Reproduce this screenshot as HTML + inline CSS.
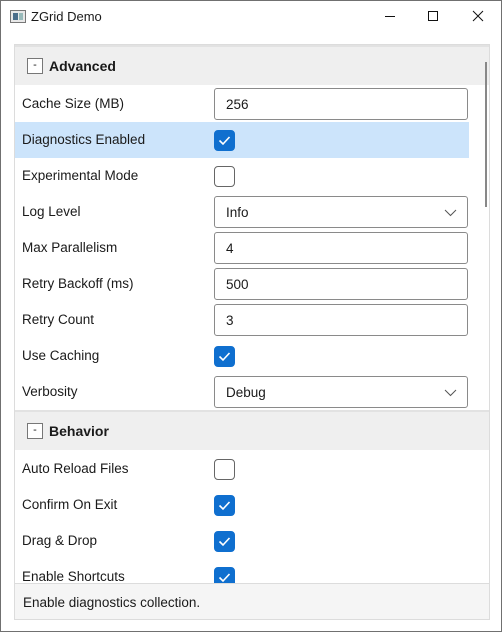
<!DOCTYPE html><html><head><style>
*{box-sizing:border-box;margin:0;padding:0}
body{width:502px;height:632px;background:#fff;font-family:"Liberation Sans",sans-serif;font-size:13.5px;color:#1a1a1a;position:relative;overflow:hidden}
.win{position:absolute;left:0;top:0;width:502px;height:632px;border:1px solid #707070}
.t{position:absolute;left:30px;top:8px;font-size:13px}
.grid{position:absolute;left:13px;top:43px;width:476px;height:576px;border:1px solid #dcdcdc;overflow:hidden}
.hdr{position:absolute;left:0;width:474px;height:40px;background:#efefef;border-top:2px solid #e2e2e2}
.hdr .b{position:absolute;left:12px;top:11px;width:16px;height:16px;border:1px solid #777;background:#fff;font-size:11px;text-align:center;line-height:13px}
.hdr .l{position:absolute;left:34px;top:11px;font-weight:bold;font-size:14px}
.row{position:absolute;left:0;width:454px;height:36px}
.row .l{position:absolute;left:7px;top:10px}
.sel{background:#cce4fb}
.in{position:absolute;left:199px;top:2px;width:254px;height:32px;border:1px solid #8a8a8a;border-radius:3px;background:#fff;padding:8px 11px;font-size:13.5px}
.cb{position:absolute;left:199px;top:8px;width:21px;height:21px;border:1px solid #666;border-radius:4px;background:#fff}
.cb.on{background:#0f6fcf;border-color:#0f6fcf}
.cb svg{position:absolute;left:3px;top:4px}
.chev{position:absolute;right:10px;top:12px}
.foot{position:absolute;left:0;top:538px;width:474px;height:37px;background:#f5f5f5;border-top:1px solid #dcdcdc;padding:11px 8px}
.sb{position:absolute;left:470px;top:17px;width:2px;height:145px;background:#888}
</style></head><body><div class="win">
<svg style="position:absolute;left:9px;top:9px" width="16" height="13"><rect x="0.5" y="0.5" width="15" height="12" fill="#e8e8e8" stroke="#777"/><rect x="3" y="3" width="5" height="7" fill="#4a6e8a"/><rect x="9" y="3" width="4" height="7" fill="#9bb"/></svg>
<div class="t">ZGrid Demo</div>
<svg style="position:absolute;left:384px;top:8px" width="110" height="16"><line x1="0" y1="7.5" x2="10" y2="7.5" stroke="#111"/><rect x="43.5" y="2.5" width="9" height="9" fill="none" stroke="#111"/><path d="M88 2L98 12M98 2L88 12" stroke="#111"/></svg>
<div class="grid">
<div class="hdr" style="top:0"><div class="b">-</div><div class="l">Advanced</div></div>
<div class="row" style="top:41px"><div class="l">Cache Size (MB)</div><div class="in">256</div></div>
<div class="row sel" style="top:77px"><div class="l">Diagnostics Enabled</div><div class="cb on"><svg width="13" height="11"><path d="M1.5 5.5L5 9L11.5 2" stroke="#fff" stroke-width="1.6" fill="none"/></svg></div></div>
<div class="row" style="top:113px"><div class="l">Experimental Mode</div><div class="cb"></div></div>
<div class="row" style="top:149px"><div class="l">Log Level</div><div class="in">Info<svg class="chev" width="13" height="8"><path d="M1 1L6.5 6.5L12 1" stroke="#555" fill="none"/></svg></div></div>
<div class="row" style="top:185px"><div class="l">Max Parallelism</div><div class="in">4</div></div>
<div class="row" style="top:221px"><div class="l">Retry Backoff (ms)</div><div class="in">500</div></div>
<div class="row" style="top:257px"><div class="l">Retry Count</div><div class="in">3</div></div>
<div class="row" style="top:293px"><div class="l">Use Caching</div><div class="cb on"><svg width="13" height="11"><path d="M1.5 5.5L5 9L11.5 2" stroke="#fff" stroke-width="1.6" fill="none"/></svg></div></div>
<div class="row" style="top:329px"><div class="l">Verbosity</div><div class="in">Debug<svg class="chev" width="13" height="8"><path d="M1 1L6.5 6.5L12 1" stroke="#555" fill="none"/></svg></div></div>
<div class="hdr" style="top:365px"><div class="b">-</div><div class="l">Behavior</div></div>
<div class="row" style="top:406px"><div class="l">Auto Reload Files</div><div class="cb"></div></div>
<div class="row" style="top:442px"><div class="l">Confirm On Exit</div><div class="cb on"><svg width="13" height="11"><path d="M1.5 5.5L5 9L11.5 2" stroke="#fff" stroke-width="1.6" fill="none"/></svg></div></div>
<div class="row" style="top:478px"><div class="l">Drag &amp; Drop</div><div class="cb on"><svg width="13" height="11"><path d="M1.5 5.5L5 9L11.5 2" stroke="#fff" stroke-width="1.6" fill="none"/></svg></div></div>
<div class="row" style="top:514px"><div class="l">Enable Shortcuts</div><div class="cb on"><svg width="13" height="11"><path d="M1.5 5.5L5 9L11.5 2" stroke="#fff" stroke-width="1.6" fill="none"/></svg></div></div>
<div class="sb"></div>
<div class="foot">Enable diagnostics collection.</div>
</div></div></body></html>
